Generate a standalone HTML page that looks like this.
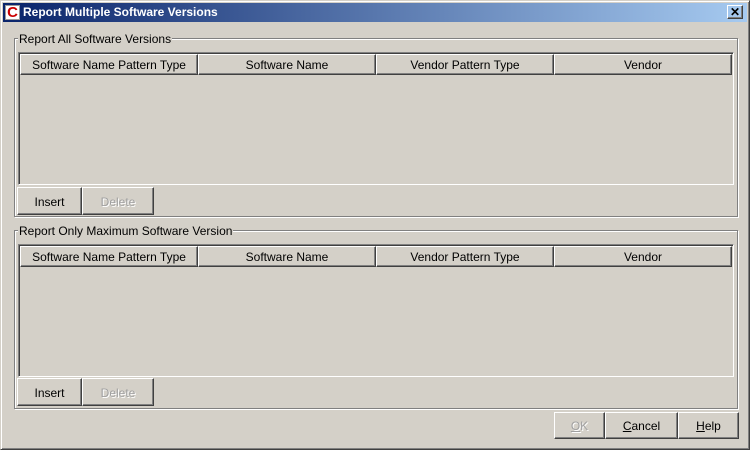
<!DOCTYPE html>
<html><head><style>
body{margin:0;width:750px;height:450px;overflow:hidden;background:#d4d0c8;font-family:"Liberation Sans",Arial,sans-serif;font-size:12px;color:#000;position:relative}
.a{position:absolute;box-sizing:border-box}
.win{left:0;top:0;width:750px;height:450px;border:1px solid;border-color:#d4d0c8 #404040 #404040 #d4d0c8;box-shadow:inset 1px 1px 0 #fff,inset -1px -1px 0 #808080}
.title{left:3px;top:3px;width:744px;height:19px;background:linear-gradient(to right,#0a246a,#a6caf0);color:#fff;font-weight:bold;font-size:12px;line-height:18px;padding-left:20px}
.grp{border:1px solid #808080;box-shadow:1px 1px 0 #fff,inset 1px 1px 0 #fff}
.leg{background:#d4d0c8;padding:0 1px;line-height:13px}
.tbl{border:1px solid;border-color:#808080 #fff #fff #808080;background:#d4d0c8;box-shadow:inset 1px 1px 0 #404040}
.hd{height:21px;border:1px solid;border-color:#fff #404040 #404040 #fff;box-shadow:inset -1px -1px 0 #808080;text-align:center;line-height:20px}
.btn{border:1px solid;border-color:#fff #404040 #404040 #fff;box-shadow:inset -1px -1px 0 #808080;text-align:center;line-height:28px}
.dis{color:#a0a0a0;text-shadow:1px 1px 0 #fff}
u{text-decoration:underline}
</style></head><body>
<div class="a win"></div>
<div class="a title">Report Multiple Software Versions</div>
<div class="a" style="left:5px;top:5px;width:15px;height:15px;background:#fff;border:1px solid #999"><div style="color:#c00;font-weight:bold;font-size:15px;line-height:14px;text-align:center">C</div></div>
<div class="a btn" style="left:727px;top:5px;width:16px;height:14px;line-height:12px;font-size:12px;font-weight:bold">✕</div>

<div class="a grp" style="left:14px;top:38px;width:724px;height:179px"></div>
<div class="a leg" style="left:18px;top:33px">Report All Software Versions</div>
<div class="a tbl" style="left:18px;top:52px;width:716px;height:133px"></div>
<div class="a hd" style="left:20px;top:54px;width:178px">Software Name Pattern Type</div>
<div class="a hd" style="left:198px;top:54px;width:178px">Software Name</div>
<div class="a hd" style="left:376px;top:54px;width:178px">Vendor Pattern Type</div>
<div class="a hd" style="left:554px;top:54px;width:178px">Vendor</div>
<div class="a btn" style="left:17px;top:187px;width:65px;height:28px">Insert</div>
<div class="a btn dis" style="left:82px;top:187px;width:72px;height:28px">Delete</div>

<div class="a grp" style="left:14px;top:230px;width:724px;height:179px"></div>
<div class="a leg" style="left:18px;top:225px">Report Only Maximum Software Version</div>
<div class="a tbl" style="left:18px;top:244px;width:716px;height:133px"></div>
<div class="a hd" style="left:20px;top:246px;width:178px">Software Name Pattern Type</div>
<div class="a hd" style="left:198px;top:246px;width:178px">Software Name</div>
<div class="a hd" style="left:376px;top:246px;width:178px">Vendor Pattern Type</div>
<div class="a hd" style="left:554px;top:246px;width:178px">Vendor</div>
<div class="a btn" style="left:17px;top:378px;width:65px;height:28px">Insert</div>
<div class="a btn dis" style="left:82px;top:378px;width:72px;height:28px">Delete</div>

<div class="a btn dis" style="left:554px;top:412px;width:51px;height:27px;line-height:27px"><u>O</u>K</div>
<div class="a btn" style="left:605px;top:412px;width:73px;height:27px;line-height:27px"><u>C</u>ancel</div>
<div class="a btn" style="left:678px;top:412px;width:61px;height:27px;line-height:27px"><u>H</u>elp</div>
</body></html>
